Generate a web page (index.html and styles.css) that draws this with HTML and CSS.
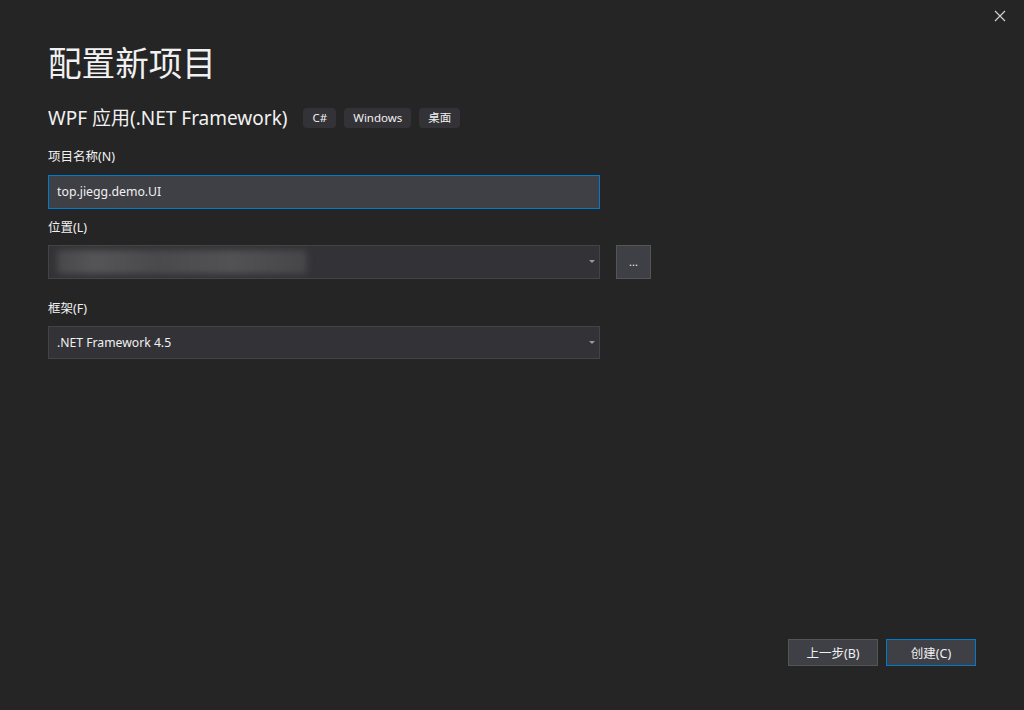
FILE: index.html
```html
<!DOCTYPE html>
<html lang="zh-CN">
<head>
<meta charset="utf-8">
<title>配置新项目</title>
<link rel="stylesheet" href="styles.css">
</head>
<body>
<div class="page">
  <button class="close" aria-label="关闭">
    <svg width="12" height="12" viewBox="0 0 12 12"><path d="M1 1L11 11M11 1L1 11" stroke="#d0d0d0" stroke-width="1.2" fill="none"/></svg>
  </button>
  <main class="content">
    <h1 class="title">配置新项目</h1>
    <div class="subtitle">
      <span class="subtitle-text">WPF 应用(.NET Framework)</span>
      <span class="tag">C#</span>
      <span class="tag">Windows</span>
      <span class="tag">桌面</span>
    </div>
    <label class="label label-first">项目名称(N)</label>
    <div class="input focused">top.jiegg.demo.UI</div>
    <label class="label label-second">位置(L)</label>
    <div class="row">
      <div class="combo combo-loc">
        <div class="blur"></div>
        <span class="arrow"></span>
      </div>
      <button class="browse">...</button>
    </div>
    <label class="label label-third">框架(F)</label>
    <div class="combo combo-fw">
      <span class="combo-text">.NET Framework 4.5</span>
      <span class="arrow"></span>
    </div>
  </main>
  <footer class="footer">
    <button class="btn">上一步(B)</button>
    <button class="btn primary">创建(C)</button>
  </footer>
</div>
</body>
</html>
```
FILE: styles.css
```css
* { box-sizing: border-box; }
html, body { margin: 0; padding: 0; }
body {
  background: #252526;
  color: #f1f1f1;
  font-family: "Noto Sans", "Noto Sans CJK SC", sans-serif;
  width: 1024px;
  height: 710px;
  overflow: hidden;
}
.page {
  position: relative;
  height: 710px;
  display: flex;
  flex-direction: column;
}
.close {
  position: absolute;
  top: 10px;
  right: 18px;
  width: 12px;
  height: 12px;
  padding: 0;
  border: none;
  background: none;
  display: flex;
}
.content {
  padding-left: 48px;
  display: flex;
  flex-direction: column;
  align-items: flex-start;
}
.title {
  margin: 42px 0 0 0;
  font-family: "Noto Sans CJK SC", sans-serif;
  font-weight: 400;
  font-size: 33.6px;
  line-height: 40px;
  color: #f1f1f1;
}
.subtitle {
  margin-top: 22px;
  height: 28px;
  display: flex;
  align-items: center;
}
.subtitle-text {
  font-size: 19px;
  line-height: 28px;
  margin-right: 16px;
}
.tag {
  height: 20px;
  line-height: 20px;
  padding: 0 9px;
  margin-right: 8px;
  background: #333337;
  border-radius: 4px;
  font-size: 11.5px;
  color: #f1f1f1;
}
.label {
  display: block;
  font-size: 12.5px;
  line-height: 18px;
  color: #f1f1f1;
}
.label-first { margin-top: 16px; }
.label-second { margin-top: 10px; }
.label-third { margin-top: 21px; }
.input {
  margin-top: 9px;
  width: 552px;
  height: 34px;
  background: #3f3f46;
  border: 1px solid #3f3f46;
  padding-left: 8px;
  font-size: 12.3px;
  line-height: 32px;
  color: #f1f1f1;
}
.input.focused { border-color: #007acc; }
.row {
  margin-top: 8px;
  display: flex;
  gap: 16px;
}
.combo {
  position: relative;
  width: 552px;
  background: #333337;
  border: 1px solid #434346;
  display: flex;
  align-items: center;
}
.combo-loc { height: 34px; }
.combo-fw { height: 33px; margin-top: 8px; }
.combo-text {
  padding-left: 8px;
  font-size: 12.2px;
  color: #f1f1f1;
}
.blur {
  margin-left: 8px;
  width: 250px;
  height: 24px;
  background: linear-gradient(90deg, #48484b 0%, #555557 15%, #4a4a4d 40%, #525254 70%, #464649 100%);
  filter: blur(3px);
  border-radius: 4px;
}
.arrow {
  position: absolute;
  right: 4px;
  top: 50%;
  margin-top: -2px;
  width: 0;
  height: 0;
  border-left: 3px solid transparent;
  border-right: 3px solid transparent;
  border-top: 3px solid #999999;
}
.browse {
  width: 35px;
  height: 34px;
  background: #3f3f46;
  border: 1px solid #555555;
  color: #f1f1f1;
  font-size: 11px;
  padding: 0;
  font-family: "Noto Sans", sans-serif;
  line-height: 30px;
}
.footer {
  margin-top: auto;
  padding: 0 48px 44px 0;
  display: flex;
  justify-content: flex-end;
  gap: 8px;
}
.btn {
  width: 90px;
  height: 27px;
  background: #3f3f46;
  border: 1px solid #555555;
  color: #f1f1f1;
  font-family: "Noto Sans", "Noto Sans CJK SC", sans-serif;
  font-size: 12.5px;
  padding: 0;
}
.btn.primary { border-color: #007acc; }
```
